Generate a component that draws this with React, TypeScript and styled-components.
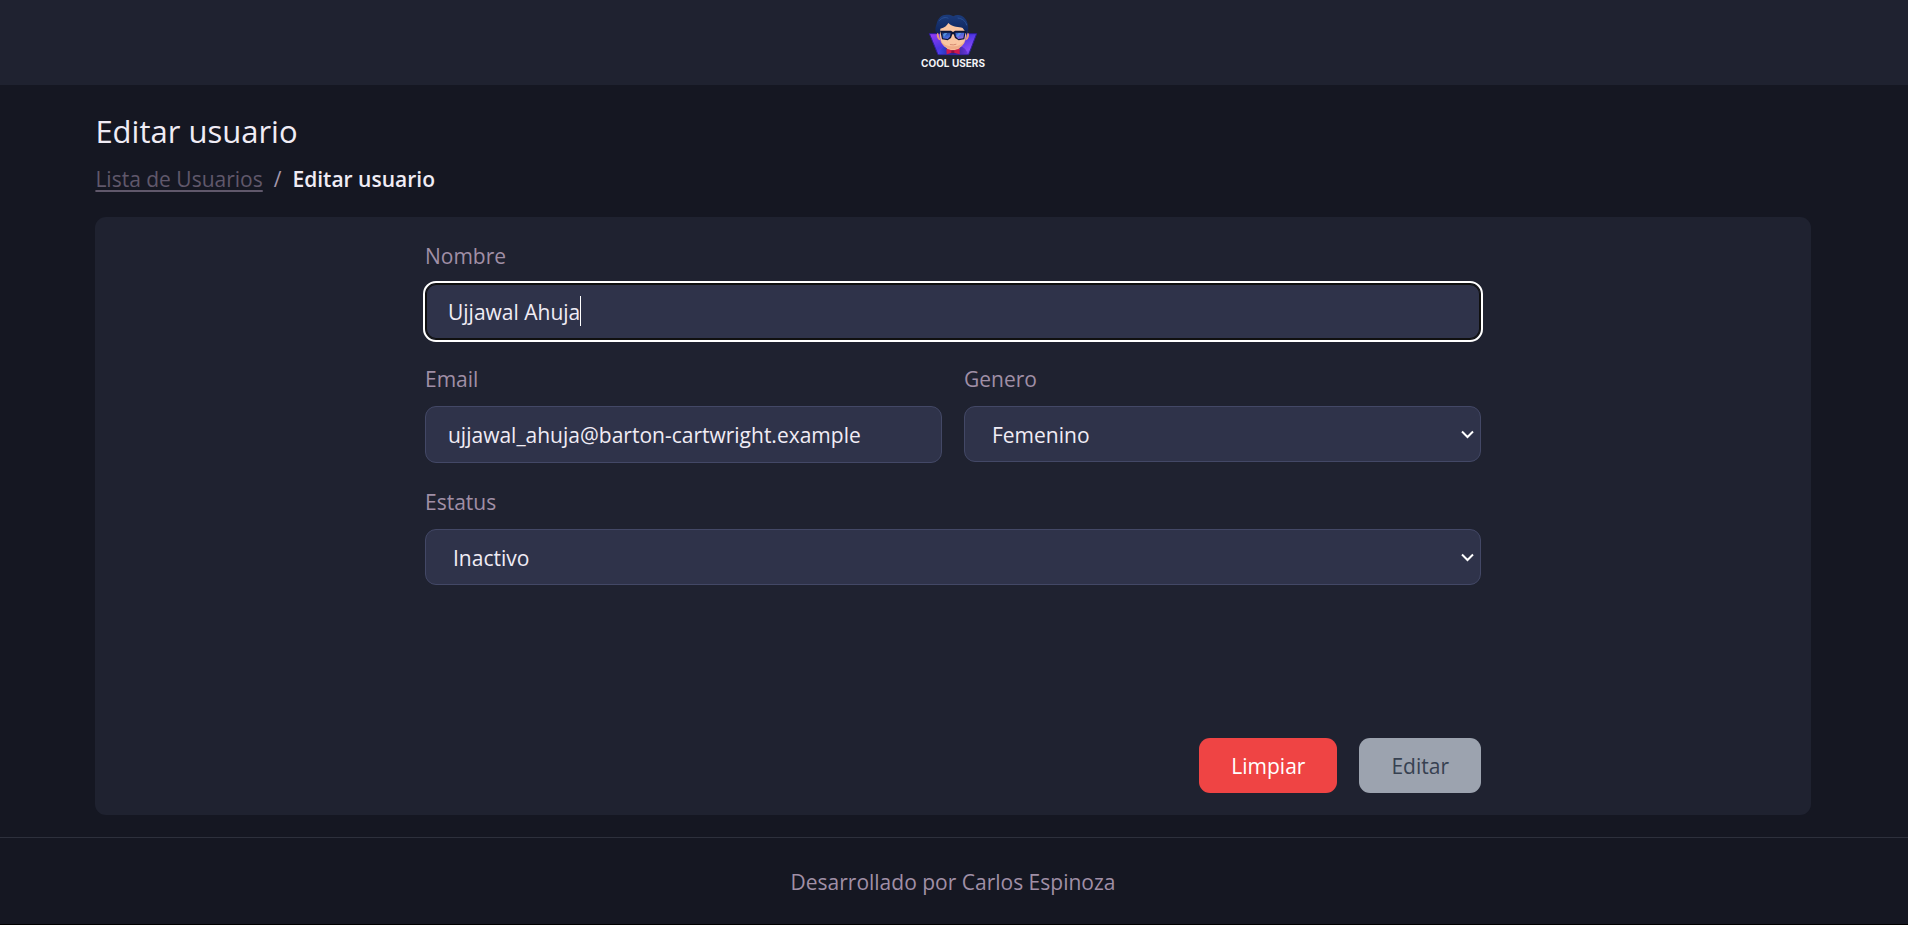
import React, { useLayoutEffect, useRef, useState } from "react";
import styled, { createGlobalStyle, css } from "styled-components";

const GlobalStyle = createGlobalStyle`
  *, *::before, *::after { box-sizing: border-box; }
  body {
    margin: 0;
    background: #151722;
    color: #f0ecf5;
    font-family: "Open Sans", "Noto Sans", sans-serif;
    font-size: 21px;
    line-height: 33px;
  }
`;

const Page = styled.div`
  display: flex;
  flex-direction: column;
  min-height: 100vh;
`;

const Header = styled.header`
  display: flex;
  justify-content: center;
  padding: 14px 24px 15px 22px;
  background: #1f2230;
`;

const Brand = styled.a`
  display: flex;
  flex-direction: column;
  align-items: center;
  color: #f4f4f8;
  text-decoration: none;
`;

const BrandName = styled.span`
  font: 700 10px/14px Inter, sans-serif;
`;

const Main = styled.main`
  flex: 1;
  display: flex;
  flex-direction: column;
  width: calc(90% - 2px);
  margin-left: 5%;
  padding: 22px 0;
`;

const Title = styled.h1`
  margin: 0 0 8px;
  font-size: 31px;
  font-weight: 400;
  line-height: 48px;
`;

const Breadcrumb = styled.nav`
  display: flex;
  gap: 11px;
  margin-bottom: 21px;
  color: #a597ad;
`;

const CrumbLink = styled.a`
  color: #60586b;
  text-underline-offset: 3px;
`;

const CrumbCurrent = styled.span`
  color: #f0ecf5;
  font-weight: 600;
`;

const Card = styled.section`
  flex: 1;
  display: flex;
  justify-content: center;
  padding: 22px;
  border-radius: 11px;
  background: #1f2230;
`;

const Form = styled.form`
  display: flex;
  flex-direction: column;
  gap: 22px;
  width: 100%;
  max-width: 1056px;
`;

const Row = styled.div`
  display: grid;
  grid-template-columns: 1fr 1fr;
  gap: 22px;
`;

const Field = styled.div`
  display: flex;
  flex-direction: column;
  gap: 9px;
  min-width: 0;
`;

const Label = styled.label`
  color: #a08fa6;
  line-height: 35px;
`;

const Control = styled.div`
  position: relative;
  display: flex;
`;

const controlBox = css`
  width: 100%;
  border: 1px solid #434866;
  border-radius: 11px;
  background: #2f334a;
  color: #f0ecf5;
  font: inherit;
`;

const Input = styled.input`
  ${controlBox}
  height: 57px;
  padding: 0 22px;
  caret-color: transparent;

  &:focus {
    border-color: #101010;
    outline: 2px solid #ffffff;
    box-shadow: inset 0 0 0 1px #101010;
  }
`;

const Caret = styled.span`
  position: absolute;
  top: 13px;
  width: 1px;
  height: 30px;
  background: #ffffff;
  pointer-events: none;
`;

const Select = styled.select`
  ${controlBox}
  height: 56px;
  padding: 2px 44px 0 27px;
  appearance: none;
`;

const Chevron = styled.svg`
  position: absolute;
  top: 24px;
  right: 7px;
  pointer-events: none;
`;

const Actions = styled.div`
  display: flex;
  justify-content: flex-end;
  gap: 22px;
  margin-top: auto;
`;

const Button = styled.button<{ $danger?: boolean }>`
  height: 55px;
  padding: 2px 32px 0;
  border: 0;
  border-radius: 11px;
  background: ${(p) => (p.$danger ? "#ef4444" : "#9ca3af")};
  color: ${(p) => (p.$danger ? "#ffffff" : "#374151")};
  font: inherit;
`;

const Footer = styled.footer`
  padding: 28px 24px 26px 22px;
  border-top: 1px solid #2d303c;
  border-bottom: 1px solid #000000;
  color: #a08fa6;
  line-height: 32px;
  text-align: center;
`;

function Logo() {
  return (
    <svg width="50" height="42" viewBox="54 42 150 126" aria-hidden="true">
      <defs>
        <linearGradient id="badge" x1="0" y1="0" x2="1" y2="1">
          <stop offset="0" stopColor="#9a3cf6" />
          <stop offset="0.45" stopColor="#4a35e0" />
          <stop offset="0.8" stopColor="#8a4af8" />
          <stop offset="1" stopColor="#3b3ad0" />
        </linearGradient>
        <linearGradient id="body" x1="0" y1="0" x2="1" y2="0">
          <stop offset="0" stopColor="#3a48e8" />
          <stop offset="0.5" stopColor="#2a2590" />
          <stop offset="1" stopColor="#6a35d8" />
        </linearGradient>
        <linearGradient id="hair" x1="0" y1="0" x2="0" y2="1">
          <stop offset="0" stopColor="#1c3c7c" />
          <stop offset="1" stopColor="#0d2258" />
        </linearGradient>
        <linearGradient id="lens" x1="0" y1="0" x2="1" y2="1">
          <stop offset="0" stopColor="#1c3474" />
          <stop offset="0.4" stopColor="#3a66d0" />
          <stop offset="1" stopColor="#9a68f0" />
        </linearGradient>
      </defs>
      <path d="M58 101H200L176 164H84Z" fill="url(#badge)" stroke="#2c1c98" strokeWidth="3" strokeLinejoin="round" />
      <path d="M86 163C88 150 95 143 110 137H150C163 142 171 150 173 163Z" fill="url(#body)" />
      <path d="M111 130H148V150L130 158L111 150Z" fill="#e58b6c" />
      <path
        d="M81 103C73 92 77 80 80 71C84 53 96 43 112 44C120 44 126 46 130 49C141 42 158 45 166 57C174 65 176 84 174 92Q174 100 170 104L164 98H90Z"
        fill="url(#hair)"
      />
      <path d="M84 98C77 99 80 119 91 121ZM173 98C180 99 178 119 166 121Z" fill="#e89878" />
      <path
        d="M91 86C104 84 111 76 115 69C128 83 148 80 158 84L168 98C169 125 157 139 142 147Q129 153 116 147C99 139 89 125 90 98Z"
        fill="#fac6a2"
      />
      <path d="M90 118C95 137 109 147 129 148C151 147 163 135 167 118C158 136 145 139 129 139C112 139 98 135 90 118Z" fill="#efab87" />
      <path d="M88 62C96 52 108 51 115 55M143 54C156 55 168 64 170 76" stroke="#2b5295" strokeWidth="3" fill="none" />
      <path d="M90 92H123L129 96L135 92H169V97L166 101L163 118L146 121L135 114L131 103H127L123 114L113 121L96 118L92 99Z" fill="#0d1738" />
      <path d="M96 98H122L120 110L113 117L99 115ZM136 98H163L160 115L145 117L138 110Z" fill="url(#lens)" />
      <path d="M104 99H112L102 111L99 104ZM146 99H154L143 112L140 106Z" fill="#5aa0e8" opacity="0.8" />
      <path d="M121 134Q130 136 138 133" stroke="#c06a58" strokeWidth="2" fill="none" strokeLinecap="round" />
      <path d="M109 146L124 151H132L149 146V163L132 158H125L110 163Z" fill="#cf194f" />
      <path d="M124 151H133V159H124Z" fill="#8b1140" />
    </svg>
  );
}

function SelectArrow() {
  return (
    <Chevron width="13" height="9" viewBox="0 0 13 9" aria-hidden="true">
      <path d="M1 1.5L6.5 7L12 1.5" fill="none" stroke="#ffffff" strokeWidth="2" />
    </Chevron>
  );
}

function NameInput() {
  const inputRef = useRef<HTMLInputElement>(null);
  const [name, setName] = useState("Ujjawal Ahuja");
  const [caretLeft, setCaretLeft] = useState(0);
  const [focused, setFocused] = useState(true);

  const placeCaret = () => {
    const input = inputRef.current;
    const context = document.createElement("canvas").getContext("2d");
    if (!input || !context) return;
    const style = getComputedStyle(input);
    context.font = `${style.fontWeight} ${style.fontSize} ${style.fontFamily}`;
    const before = input.value.slice(0, input.selectionStart ?? input.value.length);
    setCaretLeft(23 + Math.round(context.measureText(before).width));
  };

  useLayoutEffect(() => {
    const input = inputRef.current;
    if (!input) return;
    input.focus();
    input.setSelectionRange(input.value.length, input.value.length);
    placeCaret();
  }, []);

  return (
    <Control>
      <Input
        ref={inputRef}
        id="nombre"
        type="text"
        autoComplete="off"
        spellCheck={false}
        value={name}
        onChange={(e) => setName(e.target.value)}
        onSelect={placeCaret}
        onFocus={() => setFocused(true)}
        onBlur={() => setFocused(false)}
      />
      {focused && <Caret style={{ left: caretLeft }} />}
    </Control>
  );
}

export default function App() {
  return (
    <>
      <GlobalStyle />
      <Page>
        <Header>
          <Brand href="#">
            <Logo />
            <BrandName>COOL USERS</BrandName>
          </Brand>
        </Header>
        <Main>
          <Title>Editar usuario</Title>
          <Breadcrumb>
            <CrumbLink href="#">Lista de Usuarios</CrumbLink>
            <span>/</span>
            <CrumbCurrent>Editar usuario</CrumbCurrent>
          </Breadcrumb>
          <Card>
            <Form onSubmit={(e) => e.preventDefault()}>
              <Field>
                <Label htmlFor="nombre">Nombre</Label>
                <NameInput />
              </Field>
              <Row>
                <Field>
                  <Label htmlFor="email">Email</Label>
                  <Control>
                    <Input
                      id="email"
                      type="email"
                      defaultValue="ujjawal_ahuja@barton-cartwright.example"
                    />
                  </Control>
                </Field>
                <Field>
                  <Label htmlFor="genero">Genero</Label>
                  <Control>
                    <Select id="genero" defaultValue="female">
                      <option value="female">Femenino</option>
                      <option value="male">Masculino</option>
                    </Select>
                    <SelectArrow />
                  </Control>
                </Field>
              </Row>
              <Field>
                <Label htmlFor="estatus">Estatus</Label>
                <Control>
                  <Select id="estatus" defaultValue="inactive">
                    <option value="active">Activo</option>
                    <option value="inactive">Inactivo</option>
                  </Select>
                  <SelectArrow />
                </Control>
              </Field>
              <Actions>
                <Button type="reset" $danger>Limpiar</Button>
                <Button type="submit" disabled>Editar</Button>
              </Actions>
            </Form>
          </Card>
        </Main>
        <Footer>Desarrollado por Carlos Espinoza</Footer>
      </Page>
    </>
  );
}
